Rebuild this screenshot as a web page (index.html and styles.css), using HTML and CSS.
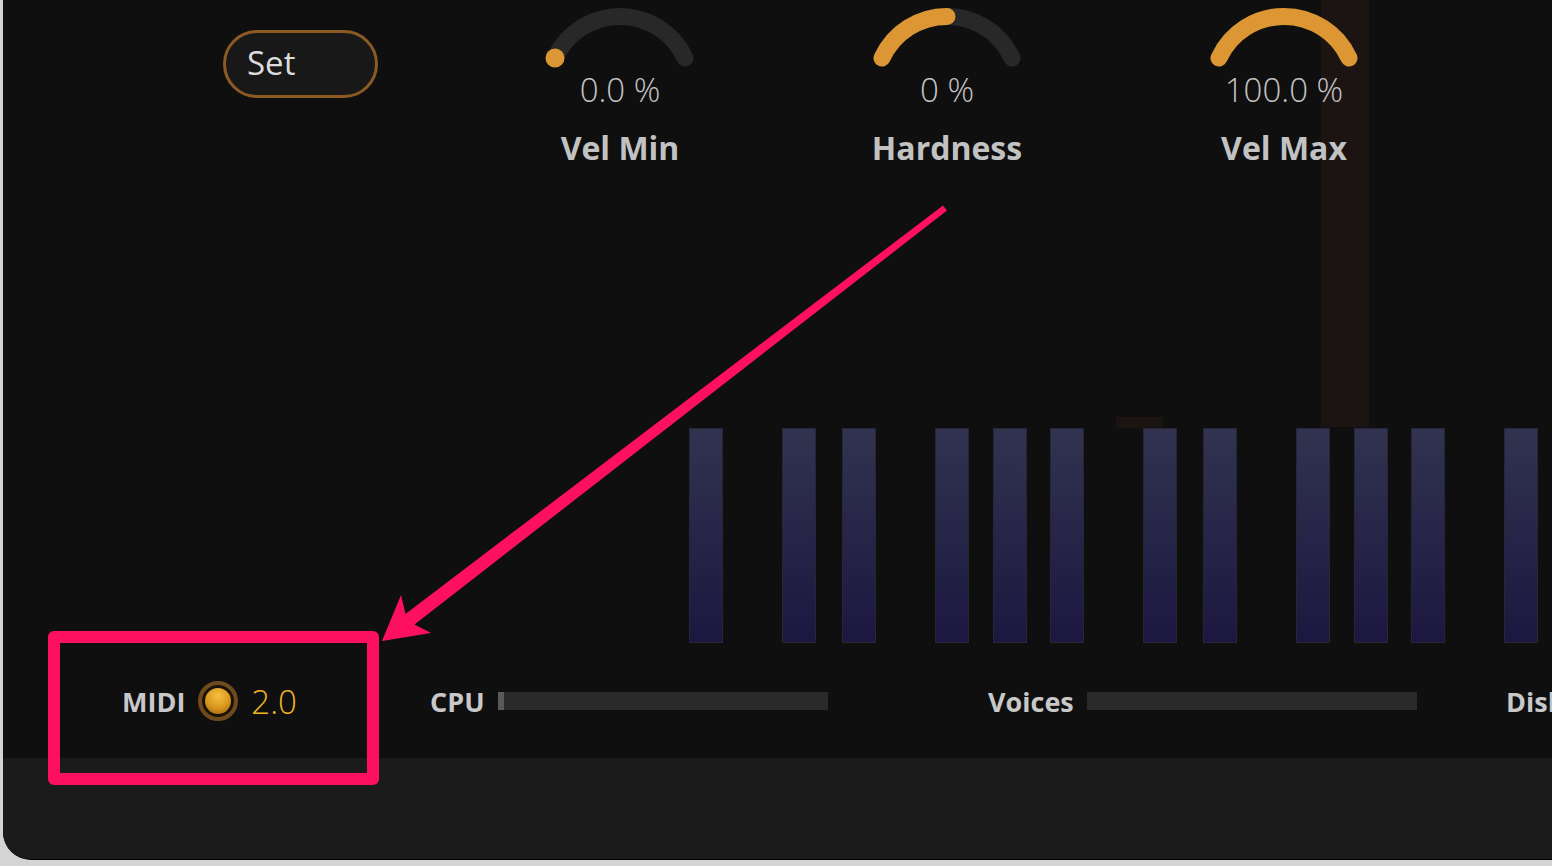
FILE: index.html
```html
<!DOCTYPE html>
<html lang="en">
<head>
  <meta charset="UTF-8" />
  <meta name="viewport" content="width=device-width, initial-scale=1" />
  <title>Piano | Performance</title>
  <link rel="stylesheet" href="styles.css">
</head>
<body>
  <div class="window">
    <main class="panel">
      <div class="marker marker-tall"></div>
      <div class="marker marker-short"></div>

      <div class="top-row">
        <button class="set-btn">Set</button>

        <div class="knob vel-min">
          <svg class="dial" width="200" height="70" viewBox="0 0 200 70">
            <path class="track" d="M35 58 A71.6 71.6 0 0 1 165 58" />
            <circle class="dot" cx="35" cy="58" r="9.5" />
          </svg>
          <div class="knob-value">0.0 %</div>
          <div class="knob-label">Vel Min</div>
        </div>

        <div class="knob hardness">
          <svg class="dial" width="200" height="70" viewBox="0 0 200 70">
            <path class="track" d="M35 58 A71.6 71.6 0 0 1 165 58" />
            <path class="fill" d="M35 58 A71.6 71.6 0 0 1 100 16.4" />
          </svg>
          <div class="knob-value">0 %</div>
          <div class="knob-label">Hardness</div>
        </div>

        <div class="knob vel-max">
          <svg class="dial" width="200" height="70" viewBox="0 0 200 70">
            <path class="fill" d="M35 58 A71.6 71.6 0 0 1 165 58" />
          </svg>
          <div class="knob-value">100.0 %</div>
          <div class="knob-label">Vel Max</div>
        </div>
      </div>

      <div class="keys">
        <div class="key"></div>
        <div class="key far"></div>
        <div class="key pair"></div>
        <div class="key far"></div>
        <div class="key trio"></div>
        <div class="key trio"></div>
        <div class="key far"></div>
        <div class="key pair"></div>
        <div class="key far"></div>
        <div class="key trio"></div>
        <div class="key trio"></div>
        <div class="key far"></div>
      </div>

      <div class="status">
        <div class="stat midi">
          <span class="stat-label">MIDI</span>
          <span class="led"></span>
          <span class="stat-value">2.0</span>
        </div>
        <div class="stat cpu">
          <span class="stat-label">CPU</span>
          <div class="meter"><div class="meter-fill" style="width: 6px;"></div></div>
        </div>
        <div class="stat voices">
          <span class="stat-label">Voices</span>
          <div class="meter"></div>
        </div>
        <div class="stat disk">
          <span class="stat-label">Disk</span>
          <div class="meter"></div>
        </div>
      </div>
    </main>
    <footer class="footer"></footer>
  </div>

  <svg class="annotation" width="1552" height="866" viewBox="0 0 1552 866">
    <rect x="54" y="637" width="319" height="142" fill="none" stroke="#fe1060" stroke-width="12" stroke-linejoin="round" />
    <polygon fill="#fe1060" points="382,641 431,633 414.5,624.5 947,210.5 943,205.5 405.5,614 401,595" />
  </svg>
</body>
</html>
```

FILE: styles.css
```css
body {
  margin: 0;
  height: 866px;
  background: #d4d4d4;
  font-family: 'Open Sans', 'DejaVu Sans', sans-serif;
  position: relative;
  overflow: hidden;
}

.window {
  margin-left: 3px;
  height: 859px;
  overflow: hidden;
  border-bottom: 1px solid #050505;
  border-bottom-left-radius: 28px;
  background: #0f0f0f;
  display: flex;
  flex-direction: column;
}

.panel {
  position: relative;
  height: 758px;
  flex-shrink: 0;
  background: #0f0f0f;
  display: flex;
  flex-direction: column;
}

.footer {
  flex: 1;
  background: #1b1b1b;
}

.marker {
  position: absolute;
  background: #1c1413;
}

.marker-tall {
  left: 1318px;
  top: 0;
  width: 48px;
  height: 427px;
}

.marker-short {
  left: 1113px;
  top: 417px;
  width: 47px;
  height: 11px;
}

.top-row {
  position: relative;
  display: flex;
  align-items: flex-start;
  height: 170px;
}

.set-btn {
  margin: 30px 0 0 220px;
  width: 155px;
  height: 68px;
  padding: 0 0 4px 21px;
  text-align: left;
  font-family: inherit;
  font-size: 33px;
  color: #dcdcdc;
  background: #181818;
  border: 3px solid #8c5a22;
  border-radius: 34px;
}

.knob {
  width: 200px;
  display: flex;
  flex-direction: column;
  align-items: center;
}

.knob.vel-min { margin-left: 142px; }
.knob.hardness { margin-left: 127px; }
.knob.vel-max { margin-left: 137px; }

.dial {
  display: block;
}

.dial .track {
  fill: none;
  stroke: #282828;
  stroke-width: 17;
  stroke-linecap: round;
}

.dial .fill {
  fill: none;
  stroke: #dc9633;
  stroke-width: 17;
  stroke-linecap: round;
}

.dial .dot {
  fill: #dc9633;
}

.knob-value {
  height: 40px;
  line-height: 40px;
  font-size: 33px;
  font-weight: 300;
  color: #c4c4c4;
}

.knob-label {
  margin-top: 18px;
  height: 40px;
  line-height: 40px;
  font-size: 32px;
  font-weight: 700;
  color: #c2c2c2;
}

.keys {
  display: flex;
  margin: 258px 0 0 686px;
  height: 215px;
}

.key {
  width: 34px;
  height: 215px;
  box-sizing: border-box;
  background: linear-gradient(to bottom, #313350, #1c1740);
  border: 1px solid #262637;
}

.key.far { margin-left: 59px; }
.key.pair { margin-left: 26px; }
.key.trio { margin-left: 23.5px; }

.status {
  display: flex;
  align-items: center;
  height: 40px;
  margin-top: 38px;
  padding-left: 119px;
}

.stat {
  display: flex;
  align-items: center;
  gap: 13px;
  flex-shrink: 0;
}

.stat.midi { width: 308px; }
.stat.cpu { width: 558px; }
.stat.voices { width: 518px; }

.stat-label {
  font-size: 27px;
  font-weight: 700;
  color: #c8c8c8;
}

.stat-value {
  font-size: 33px;
  font-weight: 300;
  color: #f2b524;
}

.led {
  width: 40px;
  height: 40px;
  box-sizing: border-box;
  border-radius: 50%;
  border: 4px solid #6e4a1e;
  background: #1a1208;
  display: flex;
  align-items: center;
  justify-content: center;
}

.led::after {
  content: "";
  width: 26px;
  height: 26px;
  border-radius: 50%;
  background: radial-gradient(circle at 50% 30%, #f7c040, #d8961e 55%, #94600f);
}

.meter {
  width: 330px;
  height: 18px;
  background: #2a2a2a;
  display: flex;
}

.meter-fill {
  height: 100%;
  background: #5a5a5a;
}

.annotation {
  position: absolute;
  top: 0;
  left: 0;
  pointer-events: none;
}
```
